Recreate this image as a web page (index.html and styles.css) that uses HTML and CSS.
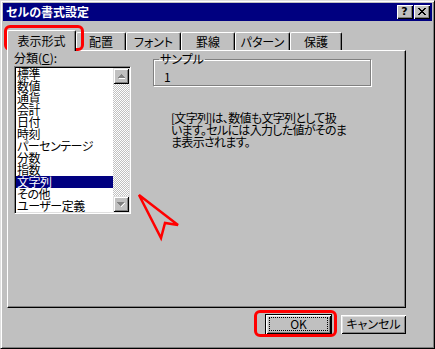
FILE: index.html
```html
<!DOCTYPE html>
<html lang="ja">
<head>
    <meta charset="UTF-8">
    <title>セルの書式設定</title>
    <link rel="stylesheet" href="styles.css">
</head>
<body>

    <div class="window">
        <div class="titlebar">
            <span class="title">セルの書式設定</span>
            <div class="title-btns">
                <span class="tbtn help">?</span>
                <span class="tbtn">
                    <svg width="8" height="7" viewBox="0 0 8 7"><path d="M0 0h2v1h1v1h2V1h1V0h2v1H7v1H6v1H5v1h1v1h1v1h1v1H6V6H5V5H3v1H2v1H0V6h1V5h1V4h1V3H2V2H1V1H0z" fill="#000"/></svg>
                </span>
            </div>
        </div>

        <div class="content">
            <div class="tabs">
                <div class="tab active">表示形式</div>
                <div class="tab w50">配置</div>
                <div class="tab w55">フォント</div>
                <div class="tab w54">罫線</div>
                <div class="tab w55">パターン</div>
                <div class="tab w52">保護</div>
            </div>

            <div class="panel">
                <div class="col-left">
                    <div class="field-label">分類(<u>C</u>):</div>
                    <div class="listbox">
                        <ul class="list">
                            <li>標準</li>
                            <li>数値</li>
                            <li>通貨</li>
                            <li>会計</li>
                            <li>日付</li>
                            <li>時刻</li>
                            <li>パーセンテージ</li>
                            <li>分数</li>
                            <li>指数</li>
                            <li class="selected">文字列</li>
                            <li>その他</li>
                            <li>ユーザー定義</li>
                        </ul>
                        <div class="scrollbar">
                            <span class="sbtn">
                                <svg width="7" height="5" viewBox="0 0 7 5"><path d="M1 4h7v1H1z" fill="#fff"/><path d="M3 0h1v1h1v1h1v1h1v1H0V3h1V2h1V1h1z" fill="#808080"/></svg>
                            </span>
                            <span class="track"></span>
                            <span class="sbtn">
                                <svg width="8" height="5" viewBox="0 0 8 5"><path d="M0 0h7v1H6v1H5v1H4v1H3V3H2V2H1V1H0z" fill="#808080"/><path d="M7 1h1v1H7zM6 2h1v1H6zM5 3h1v1H5zM4 4h1v1H4z" fill="#fff"/></svg>
                            </span>
                        </div>
                    </div>
                </div>

                <div class="col-right">
                    <fieldset class="sample">
                        <legend>サンプル</legend>
                        <div class="sample-value">1</div>
                    </fieldset>
                    <p class="desc">[文字列]は、数値も文字列として扱<br>います。セルには入力した値がそのま<br>ま表示されます。</p>
                </div>
            </div>

            <div class="buttons">
                <button class="btn default"><span class="focus">OK</span></button>
                <button class="btn"><span>キャンセル</span></button>
            </div>
        </div>

        <div class="mark mark-tab"></div>
        <div class="mark mark-ok"></div>
        <svg class="pointer" width="46" height="50" viewBox="0 0 46 50">
            <polygon points="2,2 41,32 28,30 24,45" fill="none" stroke="#ff0000" stroke-width="2.5" stroke-linejoin="miter"/>
        </svg>
    </div>

</body>
</html>
```

FILE: styles.css
```css
body {
    margin: 0;
    background: #c0c0c0;
    font-family: "Noto Sans CJK JP", sans-serif;
    font-size: 12px;
    font-feature-settings: "palt";
    color: #000;
}
.window {
    position: relative;
    width: 435px;
    height: 349px;
    box-sizing: border-box;
    padding: 1px;
    border: 1px solid;
    border-color: #dfdfdf #000 #000 #dfdfdf;
    box-shadow: inset 1px 1px #fff, inset -1px -1px #808080;
    background: #c0c0c0;
    overflow: hidden;
}
.titlebar {
    height: 18px;
    background: #000080;
    display: flex;
    align-items: center;
    justify-content: space-between;
    padding: 0 2px 0 3px;
    margin: 1px;
}
.title {
    color: #fff;
    font-weight: bold;
    font-size: 12px;
    line-height: 18px;
}
.title-btns {
    display: flex;
    gap: 1px;
}
.tbtn {
    width: 16px;
    height: 14px;
    box-sizing: border-box;
    background: #c0c0c0;
    box-shadow: inset 1px 1px #fff, inset -1px -1px #000, inset -2px -2px #808080;
    display: flex;
    align-items: center;
    justify-content: center;
    padding: 0 1px 1px 0;
}
.tbtn.help {
    font-family: "DejaVu Sans", sans-serif;
    font-weight: bold;
    font-size: 11px;
    line-height: 14px;
}
.content {
    padding: 8px 23px 0 5px;
}
.tabs {
    display: flex;
    align-items: flex-end;
    height: 20px;
}
.tab {
    position: relative;
    height: 18px;
    box-sizing: border-box;
    border-top: 1px solid #fff;
    border-left: 1px solid #fff;
    border-right: 1px solid #000;
    border-radius: 2px 2px 0 0;
    box-shadow: inset -1px 0 #808080;
    text-align: center;
    line-height: 17px;
}
.tab.active {
    width: 69px;
    height: 21px;
    margin-bottom: -1px;
    z-index: 1;
    background: #c0c0c0;
    line-height: 19px;
}
.w50 { width: 50px; }
.w52 { width: 52px; }
.w54 { width: 54px; }
.w55 { width: 55px; }

.panel {
    width: 399px;
    height: 258px;
    box-sizing: border-box;
    border-top: 1px solid #fff;
    border-left: 1px solid #fff;
    border-right: 1px solid #000;
    border-bottom: 1px solid #000;
    box-shadow: inset -1px -1px #808080;
    display: flex;
}
.col-left {
    padding-left: 6px;
}
.field-label {
    line-height: 13px;
    height: 14px;
}
.field-label u {
    text-underline-offset: 1px;
}
.listbox {
    margin-top: 1px;
    width: 117px;
    height: 148px;
    box-sizing: border-box;
    border: 1px solid;
    border-color: #808080 #fff #fff #808080;
    box-shadow: inset 1px 1px #000, inset -1px -1px #dfdfdf;
    padding: 1px;
    background: #fff;
    display: flex;
}
.list {
    list-style: none;
    margin: 0;
    padding: 0;
    flex: 1;
}
.list li {
    height: 12px;
    line-height: 12px;
    padding-left: 1px;
    letter-spacing: -0.5px;
    white-space: nowrap;
}
.list li.selected {
    background: #000080;
    color: #fff;
}
.scrollbar {
    width: 16px;
    display: flex;
    flex-direction: column;
}
.sbtn {
    height: 16px;
    box-sizing: border-box;
    background: #c0c0c0;
    box-shadow: inset 1px 1px #dfdfdf, inset -1px -1px #000, inset 2px 2px #fff, inset -2px -2px #808080;
    display: flex;
    align-items: center;
    justify-content: center;
}
.track {
    flex: 1;
    background: repeating-conic-gradient(#fff 0 25%, #c0c0c0 0 50%) 0 0 / 2px 2px;
}
.col-right {
    margin-left: 22px;
    padding-top: 2px;
}
.sample {
    width: 218px;
    height: 33px;
    box-sizing: border-box;
    margin: 0;
    padding: 6px 10px 0 10px;
    border: 1px solid #808080;
    box-shadow: inset 1px 1px #fff, 1px 1px #fff;
}
.sample legend {
    padding: 0 1px;
    margin-left: -5px;
    line-height: 12px;
}
.sample-value {
    line-height: 12px;
}
.desc {
    margin: 26px 0 0 18px;
    line-height: 12px;
    letter-spacing: -0.7px;
    white-space: nowrap;
}
.buttons {
    display: flex;
    justify-content: flex-end;
    gap: 8px;
    padding: 6px 3px 0 0;
}
.btn {
    width: 67px;
    height: 21px;
    box-sizing: border-box;
    padding: 2px 3px 3px 3px;
    margin: 0;
    border: 1px solid transparent;
    background: #c0c0c0;
    box-shadow: inset 1px 1px #fff, inset -1px -1px #000, inset 2px 2px #dfdfdf, inset -2px -2px #808080;
    font-family: "Noto Sans CJK JP", sans-serif;
    font-size: 12px;
    font-feature-settings: "palt";
    color: #000;
}
.btn span {
    display: block;
    height: 100%;
    box-sizing: border-box;
    border: 1px solid transparent;
    line-height: 12px;
}
.btn.default {
    border-color: #000;
}
.btn span.focus {
    border: 1px dotted #000;
}
.mark {
    position: absolute;
    border: 3px solid #ff0000;
    border-radius: 6px;
    box-sizing: border-box;
}
.mark-tab {
    left: 3px;
    top: 24px;
    width: 80px;
    height: 26px;
}
.mark-ok {
    left: 253px;
    top: 309px;
    width: 83px;
    height: 27px;
}
.pointer {
    position: absolute;
    left: 136px;
    top: 192px;
}
```
